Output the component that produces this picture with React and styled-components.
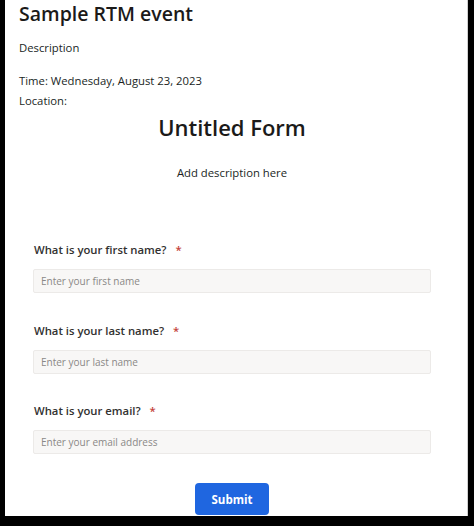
import React from "react";
import styled, { createGlobalStyle } from "styled-components";

const GlobalStyle = createGlobalStyle`
  html, body {
    margin: 0;
    padding: 0;
    background: #000;
  }
  body {
    font-family: "Open Sans", "Noto Sans", sans-serif;
    color: #201f1e;
  }
`;

const Frame = styled.div`
  margin: 5px 6px 0 5px;
  height: 516px;
  background: #fff;
  border-right: 1px solid #d0d0d0;
  box-sizing: border-box;
  padding: 0 0 0 14px;
`;

const EventTitle = styled.h1`
  margin: -5px 0 0;
  font-size: 19.5px;
  font-weight: 600;
  line-height: 27px;
  color: #1b1a19;
`;

const Line = styled.div`
  font-size: 11.3px;
  line-height: 18px;
  margin-top: ${(p) => p.$gap || 0}px;
`;

const FormWrap = styled.div`
  width: 426px;
  display: flex;
  flex-direction: column;
  align-items: center;
`;

const FormTitle = styled.h2`
  margin: 3px 0 0;
  font-size: 22px;
  font-weight: 600;
  line-height: 28px;
  color: #1b1a19;
`;

const FormDesc = styled.div`
  margin-top: 23px;
  font-size: 11.3px;
  line-height: 18px;
`;

const Questions = styled.div`
  align-self: stretch;
  padding: 0 0 0 15px;
  margin-top: 59px;
  display: flex;
  flex-direction: column;
  gap: 28.5px;
`;

const Question = styled.div`
  display: flex;
  flex-direction: column;
  gap: 10px;
`;

const Label = styled.label`
  font-size: 11.3px;
  font-weight: 600;
  line-height: 18px;
  color: #323130;
`;

const Star = styled.span`
  color: #c4423a;
  margin-left: 9px;
  font-weight: 600;
`;

const Input = styled.input`
  box-sizing: border-box;
  width: 398px;
  height: 24px;
  margin-left: -1px;
  border: 1px solid #eceae8;
  border-radius: 2px;
  background: #f8f7f6;
  padding: 0 7px;
  font-family: inherit;
  font-size: 10px;
  color: #323130;
  &::placeholder {
    color: #8a8886;
  }
`;

const Submit = styled.button`
  margin-top: 29px;
  width: 74px;
  height: 32px;
  border: none;
  border-radius: 4px;
  background: #1f66e0;
  color: #fff;
  font-family: inherit;
  font-size: 11.5px;
  font-weight: 700;
`;

const questions = [
  { label: "What is your first name?", placeholder: "Enter your first name" },
  { label: "What is your last name?", placeholder: "Enter your last name" },
  { label: "What is your email?", placeholder: "Enter your email address" },
];

export default function App() {
  return (
    <>
      <GlobalStyle />
      <Frame>
        <EventTitle>Sample RTM event</EventTitle>
        <Line $gap={12}>Description</Line>
        <Line $gap={15}>Time: Wednesday, August 23, 2023</Line>
        <Line $gap={2}>Location:</Line>
        <FormWrap>
          <FormTitle>Untitled Form</FormTitle>
          <FormDesc>Add description here</FormDesc>
          <Questions>
            {questions.map((q) => (
              <Question key={q.label}>
                <Label>
                  {q.label}
                  <Star>*</Star>
                </Label>
                <Input placeholder={q.placeholder} />
              </Question>
            ))}
          </Questions>
          <Submit>Submit</Submit>
        </FormWrap>
      </Frame>
    </>
  );
}
